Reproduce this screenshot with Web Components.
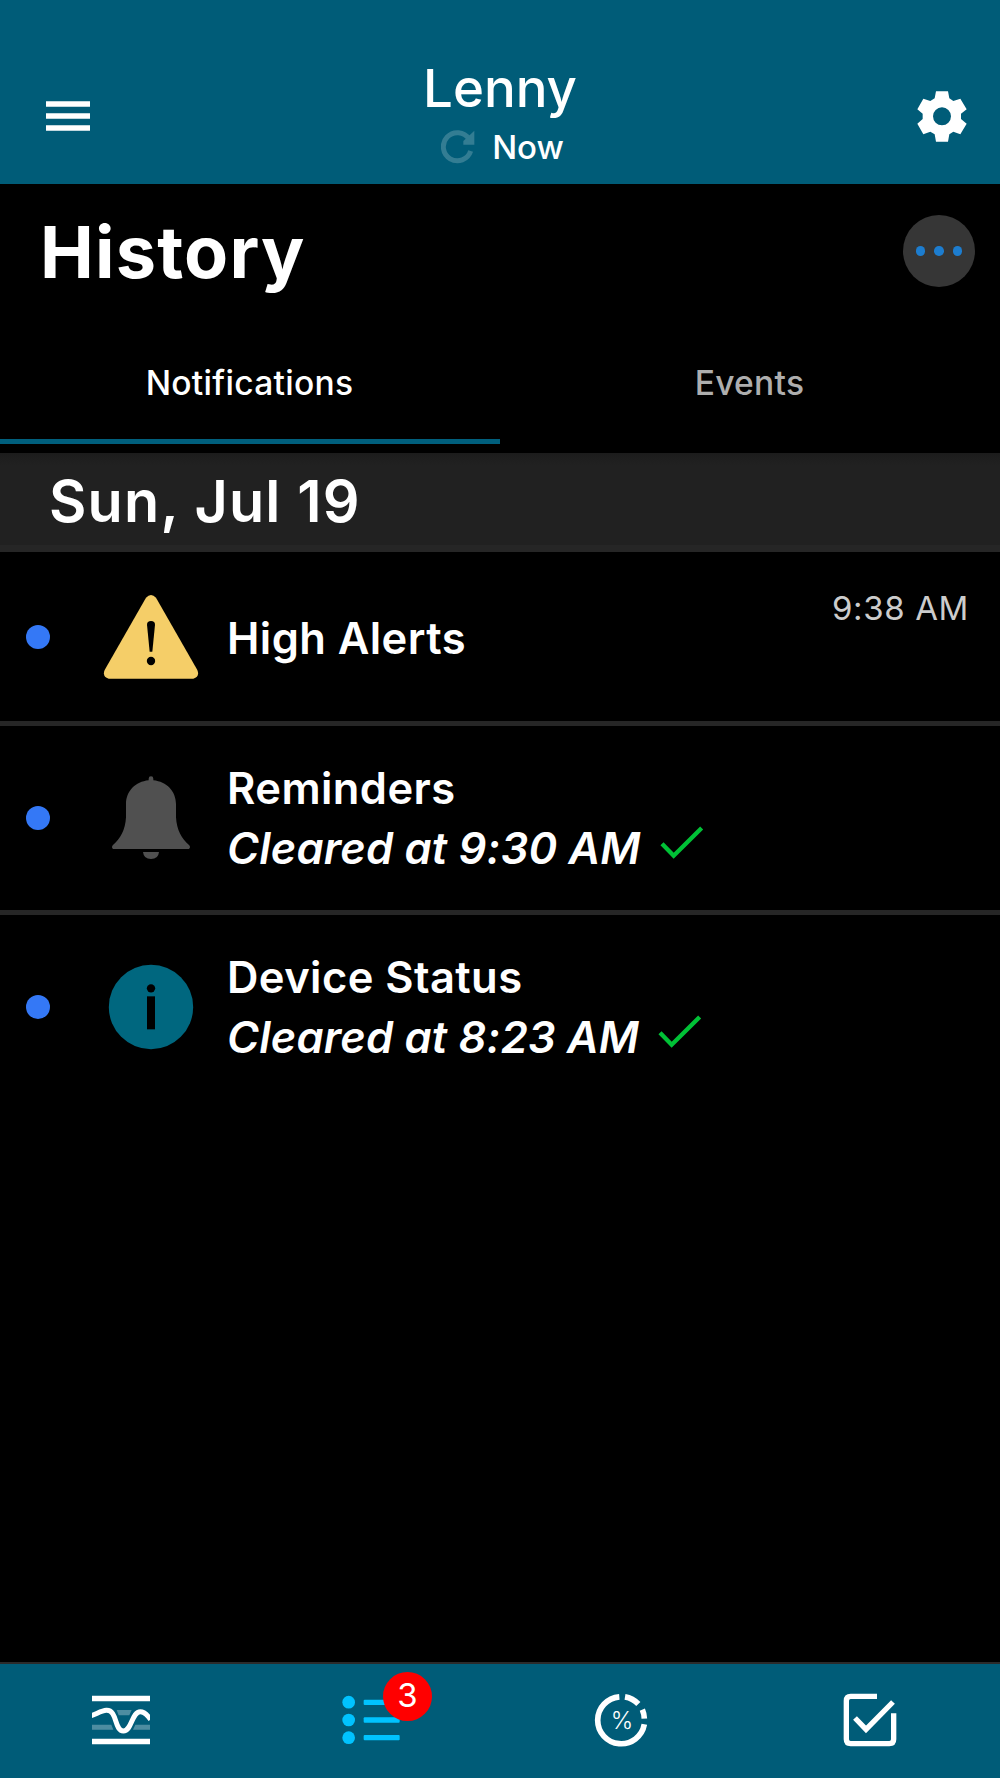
<!DOCTYPE html>
<html lang="en">
<head>
<meta charset="utf-8">
<title>History</title>
<style>
  body {
    margin: 0;
    background: #000;
    color: #fff;
    font-family: Inter, "Liberation Sans", sans-serif;
  }
</style>
</head>
<body>
<history-app></history-app>

<script>
const ICONS = {
  menu: `<svg width="44" height="30" viewBox="0 0 44 30" fill="#fff">
    <path d="M0 .2h44v5.6H0zM0 12.2h44v5.6H0zM0 24.2h44v5.6H0z"/></svg>`,
  gear: `<svg width="50" height="51" viewBox="201 63 150 153">
    <path fill="#fff" fill-rule="evenodd" d="M258 64H294L298 85 310 93 331 86 350 118 333 131V147L350 161 331 193 310 185 298 193 294 215H258L254 193 241 185 220 193 202 161 218 147V131L202 118 220 86 241 93 254 85ZM276 112a27 27 0 1 0 0 54a27 27 0 1 0 0-54Z"/></svg>`,
  refresh: `<svg width="34" height="34" viewBox="122 271 102 102">
    <path d="M206 298A42 42 0 1 0 211 334" fill="none" stroke="#337d93" stroke-width="15"/>
    <path d="M222 273V315H189V304Z" fill="#337d93"/></svg>`,
  warning: `<svg width="96" height="96" viewBox="309 117 288 288">
    <path fill="#f5ce68" d="M438 143Q453 127 468 143L592 360Q600 380 580 386H326Q306 380 314 360Z"/>
    <path fill="#000" d="M441 224q0-11 12-11t12 11L457 305h-8Z"/>
    <circle cx="453" cy="333" r="12.5"/></svg>`,
  bell: `<svg width="96" height="96" viewBox="309 90 288 288" fill="#505050">
    <path d="M446 121V116q0-7 7-7t7 7v5C500 125 528 154 528 192V232C530 270 545 296 567 315Q573 322 567 327H339Q333 322 339 315C361 296 376 270 378 232V192C378 154 406 125 446 121Z"/>
    <path d="M429 336h48q-2 21-24 21t-24-21Z"/></svg>`,
  info: `<svg width="96" height="96" viewBox="309 116 288 288">
    <circle cx="453" cy="260" r="126.5" fill="#00677f"/>
    <circle cx="453" cy="204" r="12.5"/>
    <path d="M441 228h24v99h-24Z"/></svg>`,
  check: `<svg width="44" height="34" viewBox="0 0 132 102">
    <path d="M6 56L41 92 125 9" fill="none" stroke="#00c136" stroke-width="13"/></svg>`,
  graph: `<svg width="58" height="50" viewBox="128 139 174 150">
    <path fill="#4d8da1" d="M202 184h45l-7 16h-32zM128 228h58l6 15h-64zM258 228h44v15h-51z"/>
    <path fill="#fff" d="M128 141h174v17H128zM128 270h174v17H128z"/>
    <path d="M126 201C142 196 156 186 171 185 205 183 194 247 222 247 248 247 247 189 273 189 286 189 296 201 304 213" fill="none" stroke="#fff" stroke-width="15"/></svg>`,
  list: `<svg width="58" height="50" viewBox="877 136 174 150" fill="#00c3ff">
    <circle cx="897" cy="157.500" r="19"/><circle cx="897" cy="211" r="19"/><circle cx="897" cy="264" r="19"/>
    <rect x="942" y="150" width="108" height="16" rx="3"/><rect x="942" y="203" width="108" height="16" rx="3"/><rect x="942" y="256" width="108" height="16" rx="3"/></svg>`,
  percent: `<svg width="54" height="54" viewBox="103 132 162 162">
    <path d="M254 226A70.500 70.500 0 1 1 179 143.500M196 143.500A70.500 70.500 0 0 1 236 165M248 182A70.500 70.500 0 0 1 254 209" fill="none" stroke="#fff" stroke-width="17"/>
    <text x="187" y="239" text-anchor="middle" font-size="72" font-weight="300" fill="#fff">%</text></svg>`,
  task: `<svg width="54" height="54" viewBox="853 133 162 162" fill="none" stroke="#fff" stroke-width="16">
    <path d="M955 143H876q-13 0-13 13V272q0 13 13 13H992q13 0 13-13V194"/>
    <path d="M889 208L922 242 1003 160"/></svg>`
};

function attach(el, html) {
  el.attachShadow({ mode: "open" }).innerHTML = html;
}

class UiIcon extends HTMLElement {
  connectedCallback() {
    attach(this, `
      <style>
        :host { display: inline-flex; flex: none; }
        svg { display: block; flex: none; }
      </style>
      ${ICONS[this.getAttribute("name")]}`);
  }
}

class AppHeader extends HTMLElement {
  connectedCallback() {
    attach(this, `
      <style>
        :host {
          display: grid;
          grid-template-columns: 1fr 400px 1fr;
          height: 184px;
          background: #005c78;
        }
        .side { display: flex; align-items: center; padding: 48px 0 0 46px; }
        .side.right { justify-content: flex-end; padding: 49px 33px 0 0; }
        .center {
          display: flex;
          flex-direction: column;
          align-items: center;
          gap: 9px;
          padding-top: 58px;
        }
        .name { font-size: 52.8px; font-weight: 500; line-height: 60px; }
        .sync {
          display: flex;
          align-items: center;
          gap: 17px;
          margin-left: 5px;
          font-size: 33px;
          font-weight: 500;
          line-height: 40px;
        }
      </style>
      <div class="side"><ui-icon name="menu"></ui-icon></div>
      <div class="center">
        <div class="name"><slot></slot></div>
        <div class="sync"><ui-icon name="refresh"></ui-icon><slot name="status"></slot></div>
      </div>
      <div class="side right"><ui-icon name="gear"></ui-icon></div>`);
  }
}

class PageTitle extends HTMLElement {
  connectedCallback() {
    attach(this, `
      <style>
        :host {
          display: flex;
          align-items: center;
          justify-content: space-between;
          height: 134px;
          padding: 0 25px 0 40px;
        }
        h1 { margin: 2px 0 0; font-size: 72px; font-weight: 700; line-height: 86px; letter-spacing: 1.2px; }
        .more {
          display: flex;
          align-items: center;
          justify-content: center;
          gap: 9px;
          width: 72px;
          height: 72px;
          border-radius: 50%;
          background: #363636;
        }
        .more i { width: 9.6px; height: 9.6px; border-radius: 50%; background: #1d7dcf; }
      </style>
      <h1><slot></slot></h1>
      <div class="more"><i></i><i></i><i></i></div>`);
  }
}

class TabItem extends HTMLElement {
  connectedCallback() {
    attach(this, `
      <style>
        :host {
          display: flex;
          flex: 1;
          align-items: center;
          justify-content: center;
          padding: 7px 1px 0 0;
          border-bottom: 5px solid transparent;
          color: #aeaeae;
          font-size: 33.6px;
          font-weight: 500;
          letter-spacing: 0.28px;
        }
        :host([active]) { border-color: #005f7d; color: #fff; }
      </style>
      <slot></slot>`);
  }
}

class TabBar extends HTMLElement {
  connectedCallback() {
    attach(this, `
      <style>
        :host { display: flex; height: 126px; padding-bottom: 9px; }
      </style>
      <slot></slot>`);
  }
}

class DateHeader extends HTMLElement {
  connectedCallback() {
    attach(this, `
      <style>
        :host {
          display: flex;
          align-items: center;
          box-sizing: border-box;
          height: 99px;
          padding: 3px 0 0 49px;
          border-bottom: 7px solid #262626;
          background: linear-gradient(#1c1c1c, #212121 12px);
          font-size: 57.5px;
          font-weight: 600;
          letter-spacing: 1.2px;
        }
      </style>
      <slot></slot>`);
  }
}

class NotificationRow extends HTMLElement {
  connectedCallback() {
    const cleared = this.getAttribute("cleared");
    const time = this.getAttribute("time");
    attach(this, `
      <style>
        :host {
          display: grid;
          grid-template-columns: 24px 96px 1fr auto;
          align-items: center;
          height: 184px;
          padding: 0 31px 0 26px;
          border-bottom: 5px solid #262626;
        }
        :host([time]) { height: 169px; }
        :host(:last-of-type) { border: 0; }
        .dot { width: 24px; height: 24px; border-radius: 50%; background: #3478f6; }
        .kind { margin-left: 53px; }
        .text { margin-left: 81px; font-size: 43.5px; font-weight: 600; line-height: 60px; letter-spacing: 0.42px; }
        :host([time]) .text { margin-top: 2px; }
        .cleared { display: flex; align-items: center; gap: 19px; font-style: italic; letter-spacing: 0.19px; }
        .cleared ui-icon { margin-bottom: 12px; }
        .time {
          align-self: start;
          margin-top: 36px;
          color: #ccc;
          font-size: 33px;
          line-height: 40px;
          letter-spacing: 0.63px;
        }
      </style>
      <span class="dot"></span>
      <ui-icon class="kind" name="${this.getAttribute("icon")}"></ui-icon>
      <div class="text">
        <div><slot></slot></div>
        ${cleared ? `<div class="cleared">${cleared}<ui-icon name="check"></ui-icon></div>` : ""}
      </div>
      ${time ? `<div class="time">${time}</div>` : ""}`);
  }
}

class NavItem extends HTMLElement {
  connectedCallback() {
    const badge = this.getAttribute("badge");
    attach(this, `
      <style>
        :host { display: flex; align-items: center; justify-content: center; padding-top: 2px; }
        .wrap { position: relative; }
        .badge {
          position: absolute;
          left: 41px;
          top: -23px;
          width: 49px;
          height: 49px;
          border-radius: 50%;
          background: #f00;
          font-size: 33px;
          line-height: 47px;
          text-align: center;
        }
      </style>
      <div class="wrap">
        <ui-icon name="${this.getAttribute("icon")}"></ui-icon>
        ${badge ? `<span class="badge">${badge}</span>` : ""}
      </div>`);
  }
}

class BottomNav extends HTMLElement {
  connectedCallback() {
    attach(this, `
      <style>
        :host {
          display: grid;
          grid-template-columns: repeat(4, 249.7px);
          box-sizing: border-box;
          height: 116px;
          border-top: 2px solid #2b2b2b;
          background: #005c78;
        }
        ::slotted(*) { margin-left: -7px; }
      </style>
      <slot></slot>`);
  }
}

class HistoryApp extends HTMLElement {
  connectedCallback() {
    attach(this, `
      <style>
        :host { display: flex; flex-direction: column; width: 1000px; height: 1778px; overflow: hidden; }
        main { flex: 1; }
      </style>
      <app-header>Lenny<span slot="status">Now</span></app-header>
      <page-title>History</page-title>
      <tab-bar>
        <tab-item active>Notifications</tab-item>
        <tab-item>Events</tab-item>
      </tab-bar>
      <date-header>Sun, Jul 19</date-header>
      <main>
        <notification-row icon="warning" time="9:38 AM">High Alerts</notification-row>
        <notification-row icon="bell" cleared="Cleared at 9:30 AM">Reminders</notification-row>
        <notification-row icon="info" cleared="Cleared at 8:23 AM">Device Status</notification-row>
      </main>
      <bottom-nav>
        <nav-item icon="graph"></nav-item>
        <nav-item icon="list" badge="3"></nav-item>
        <nav-item icon="percent"></nav-item>
        <nav-item icon="task"></nav-item>
      </bottom-nav>`);
  }
}

customElements.define("ui-icon", UiIcon);
customElements.define("app-header", AppHeader);
customElements.define("page-title", PageTitle);
customElements.define("tab-item", TabItem);
customElements.define("tab-bar", TabBar);
customElements.define("date-header", DateHeader);
customElements.define("notification-row", NotificationRow);
customElements.define("nav-item", NavItem);
customElements.define("bottom-nav", BottomNav);
customElements.define("history-app", HistoryApp);
</script>
</body>
</html>
